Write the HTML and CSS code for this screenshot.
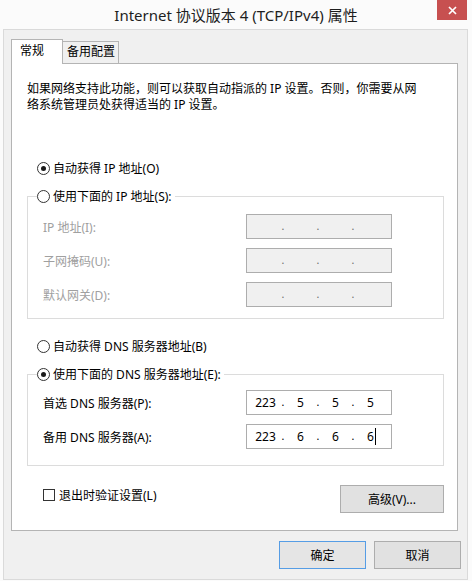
FILE: index.html
```html
<!DOCTYPE html>
<html lang="zh-CN">
<head>
<meta charset="utf-8">
<title>Internet 协议版本 4 (TCP/IPv4) 属性</title>
<link rel="stylesheet" href="styles.css">
</head>
<body>
<div class="window">
  <div class="titlebar">
    <div></div>
    <div class="title">Internet 协议版本 4 (TCP/IPv4) 属性</div>
    <div class="controls">
      <button class="close" aria-label="关闭">
        <svg width="9" height="9" viewBox="0 0 9 9"><path d="M1 1 L8 8 M8 1 L1 8" stroke="#fff" stroke-width="1.7" fill="none"/></svg>
      </button>
    </div>
  </div>
  <div class="client">
    <div class="tabs">
      <div class="tab active">常规</div>
      <div class="tab">备用配置</div>
    </div>
    <div class="panel">
      <p class="intro">如果网络支持此功能，则可以获取自动指派的 IP 设置。否则，你需要从网<br>络系统管理员处获得适当的 IP 设置。</p>

      <div class="option first"><span class="radio checked"></span>自动获得 IP 地址(O)</div>

      <div class="group">
        <div class="legend"><span class="radio"></span>使用下面的 IP 地址(S):</div>
        <div class="fields">
          <span class="label disabled">IP 地址(I):</span>
          <div class="ipbox disabled"><span class="oct"></span><span class="dot">.</span><span class="oct"></span><span class="dot">.</span><span class="oct"></span><span class="dot">.</span><span class="oct"></span></div>
          <span class="label disabled">子网掩码(U):</span>
          <div class="ipbox disabled"><span class="oct"></span><span class="dot">.</span><span class="oct"></span><span class="dot">.</span><span class="oct"></span><span class="dot">.</span><span class="oct"></span></div>
          <span class="label disabled">默认网关(D):</span>
          <div class="ipbox disabled"><span class="oct"></span><span class="dot">.</span><span class="oct"></span><span class="dot">.</span><span class="oct"></span><span class="dot">.</span><span class="oct"></span></div>
        </div>
      </div>

      <div class="option second"><span class="radio"></span>自动获得 DNS 服务器地址(B)</div>

      <div class="group dns">
        <div class="legend"><span class="radio checked"></span>使用下面的 DNS 服务器地址(E):</div>
        <div class="fields">
          <span class="label">首选 DNS 服务器(P):</span>
          <div class="ipbox"><span class="oct">223</span><span class="dot">.</span><span class="oct">5</span><span class="dot">.</span><span class="oct">5</span><span class="dot">.</span><span class="oct">5</span></div>
          <span class="label">备用 DNS 服务器(A):</span>
          <div class="ipbox"><span class="oct">223</span><span class="dot">.</span><span class="oct">6</span><span class="dot">.</span><span class="oct">6</span><span class="dot">.</span><span class="oct last">6<span class="caret"></span></span></div>
        </div>
      </div>

      <div class="bottomrow">
        <div class="check"><span class="box"></span>退出时验证设置(L)</div>
        <button class="btn advanced">高级(V)...</button>
      </div>
    </div>
    <div class="footer">
      <button class="btn default">确定</button>
      <button class="btn">取消</button>
    </div>
  </div>
</div>
</body>
</html>
```

FILE: styles.css
```css
* { box-sizing: border-box; }

body {
  margin: 0;
  background: #fbfbfb;
  font-family: "Noto Sans", "Noto Sans CJK SC", sans-serif;
  font-size: 12px;
  color: #000;
}

.window {
  width: 472px;
  height: 581px;
  display: flex;
  flex-direction: column;
}

.titlebar {
  height: 29px;
  display: grid;
  grid-template-columns: 1fr auto 1fr;
  align-items: start;
}

.title {
  font-size: 15px;
  line-height: 30px;
  color: #1e1e1e;
  white-space: nowrap;
}

.controls {
  display: flex;
  justify-content: flex-end;
  padding-right: 5px;
}

.close {
  width: 30px;
  height: 20px;
  padding: 0;
  border: 0;
  background: #c75050;
  display: flex;
  align-items: center;
  justify-content: center;
}

.close svg { display: block; }

.client {
  flex: 1;
  margin: 0 4px 1px 3px;
  background: #f0f0f0;
  border: 1px solid #dadada;
  padding: 9px 6px 9px 7px;
  display: flex;
  flex-direction: column;
}

.tabs {
  display: flex;
  align-items: flex-end;
  height: 24px;
}

.tab {
  height: 22px;
  line-height: 20px;
  border: 1px solid #b4b4b4;
  border-bottom: 0;
  background: #f0f0f0;
  padding: 0 0 0 4px;
  width: 57px;
  margin-left: -1px;
}

.tab.active {
  height: 25px;
  line-height: 22px;
  width: 52px;
  margin-left: 0;
  padding-left: 8px;
  background: #fff;
  position: relative;
  z-index: 1;
  margin-bottom: -1px;
}

.panel {
  width: 447px;
  height: 468px;
  background: #fff;
  border: 1px solid #b4b4b4;
  padding: 17px 0 0 15px;
}

.intro {
  margin: 0;
  line-height: 16px;
  white-space: nowrap;
}

.option {
  display: flex;
  align-items: center;
  height: 18px;
  margin-left: 10px;
}

.option.first { margin-top: 46px; }
.option.second { margin-top: 18px; }

.radio {
  width: 13px;
  height: 13px;
  border: 1px solid #333;
  border-radius: 50%;
  background: #fff;
  margin-right: 3px;
  display: inline-flex;
  align-items: center;
  justify-content: center;
  flex: none;
}

.radio.checked::before {
  content: "";
  width: 5px;
  height: 5px;
  border-radius: 50%;
  background: #1a1a1a;
}

.group {
  width: 417px;
  margin-top: 19px;
  border: 1px solid #dcdcdc;
  padding-bottom: 11px;
}

.group.dns { padding-bottom: 16px; }

.legend {
  display: flex;
  align-items: center;
  width: fit-content;
  height: 18px;
  margin-top: -10px;
  margin-left: 9px;
  padding-right: 3px;
  background: #fff;
}

.fields {
  display: grid;
  grid-template-columns: 203px 146px;
  grid-auto-rows: 25px;
  row-gap: 9px;
  align-items: center;
  margin-top: 9px;
  padding-left: 15px;
}

.group.dns .fields { margin-top: 7px; }

.label.disabled { color: #a0a0a0; }

.ipbox {
  height: 25px;
  border: 1px solid #adadad;
  background: #fff;
  display: flex;
  align-items: center;
  padding-left: 2px;
  line-height: 23px;
}

.ipbox.disabled {
  background: #f0f0f0;
}

.oct {
  width: 33px;
  text-align: center;
  font-family: "Noto Sans", sans-serif;
  font-size: 12px;
  color: #000;
}

.dot {
  width: 2px;
  display: flex;
  justify-content: center;
  font-family: "Liberation Sans", sans-serif;
  color: #000;
}

.ipbox.disabled .dot { color: #707070; }

.oct.last {
  display: flex;
  justify-content: center;
  align-items: center;
  padding-left: 2px;
}

.caret {
  width: 1px;
  height: 17px;
  background: #000;
  margin-left: 1px;
}

.bottomrow {
  width: 417px;
  margin-top: 19px;
  display: flex;
  justify-content: space-between;
  align-items: flex-start;
}

.check {
  display: flex;
  align-items: center;
  height: 18px;
  margin-top: 1px;
  padding-left: 16px;
}

.box {
  width: 12px;
  height: 12px;
  border: 1px solid #333;
  background: #fff;
  margin-right: 4px;
}

.btn {
  height: 28px;
  border: 1px solid #adadad;
  background: #e1e1e1;
  font-family: "Noto Sans", "Noto Sans CJK SC", sans-serif;
  font-size: 12px;
  color: #000;
  padding: 0;
}

.advanced { width: 104px; }

.footer {
  margin-top: 10px;
  display: flex;
  justify-content: flex-end;
  gap: 8px;
}

.footer .btn { width: 87px; }

.btn.default {
  border-color: #569de5;
  background: #e5e5e5;
}
```
